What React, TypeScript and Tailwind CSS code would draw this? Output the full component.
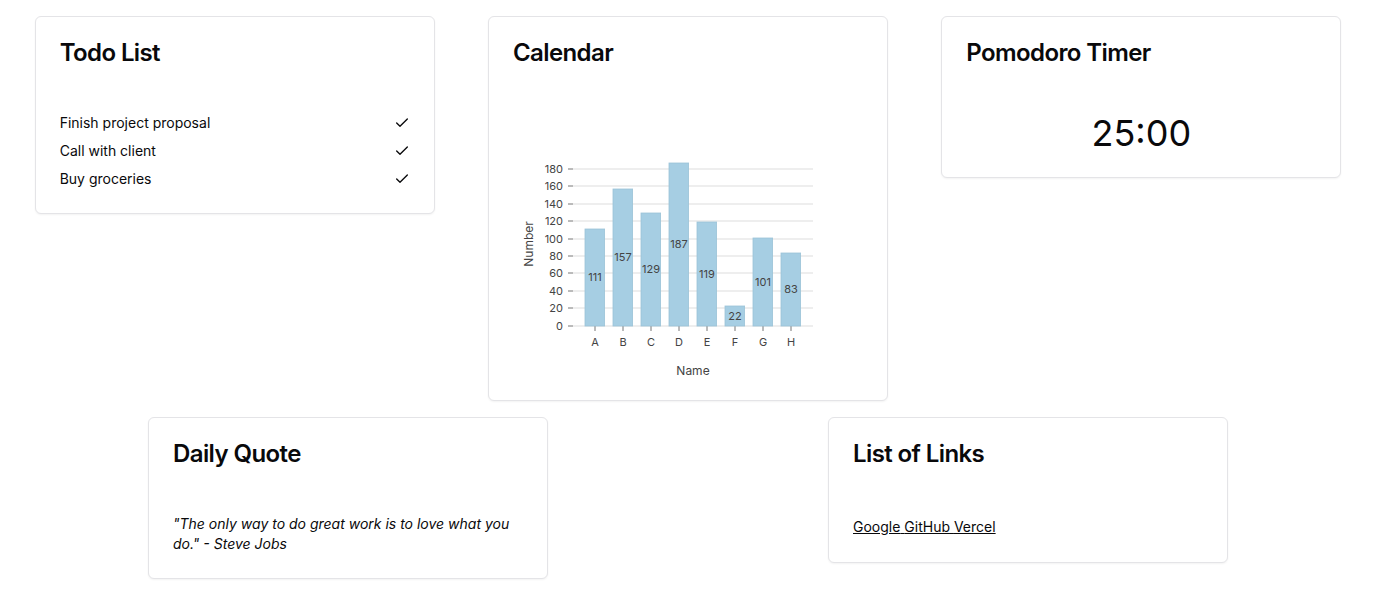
import type { ReactNode } from "react";
import { Check } from "lucide-react";

function Card({ title, children }: { title: string; children: ReactNode }) {
  return (
    <section className="w-[400px] max-w-full rounded-md border border-[#e4e4e7] bg-white text-[#09090b] shadow-xs">
      <header className="p-6">
        <h2 className="text-2xl leading-none font-semibold tracking-tight">{title}</h2>
      </header>
      <div className="p-6">{children}</div>
    </section>
  );
}

const todos = ["Finish project proposal", "Call with client", "Buy groceries"];

const links = [
  { label: "Google", href: "https://google.com" },
  { label: "GitHub", href: "https://github.com" },
  { label: "Vercel", href: "https://vercel.com" },
];

const data = [
  { name: "A", count: 111 },
  { name: "B", count: 157 },
  { name: "C", count: 129 },
  { name: "D", count: 187 },
  { name: "E", count: 119 },
  { name: "F", count: 22 },
  { name: "G", count: 101 },
  { name: "H", count: 83 },
];

const ticks = [0, 20, 40, 60, 80, 100, 120, 140, 160, 180];
const plotWidth = 240;
const plotHeight = 163;
const barWidth = 20;
const barStep = 28;
const yScale = (value: number) => Math.round((1 - value / 187) * 162.5);

function BarChart() {
  return (
    <svg
      viewBox="0 0 350 262.5"
      role="img"
      aria-label="Number by name"
      className="block aspect-[4/3] w-full overflow-visible"
    >
      <g transform="translate(60,50)" fill="#444444" fontSize="11">
        {ticks.map((t) => (
          <line key={t} x1={0} x2={plotWidth} y1={yScale(t)} y2={yScale(t)} stroke="#dddddd" />
        ))}
        {ticks.map((t) => (
          <g key={t} transform={`translate(0,${yScale(t)})`}>
            <line x1={-5} x2={0} y1={0} y2={0} stroke="#777777" />
            <text x={-10} y={4} textAnchor="end">
              {t}
            </text>
          </g>
        ))}
        {data.map((d, i) => (
          <g key={d.name} transform={`translate(${12 + i * barStep + barWidth / 2},${plotHeight})`}>
            <line y1={0} y2={5} stroke="#777777" />
            <text y={20} textAnchor="middle">
              {d.name}
            </text>
          </g>
        ))}
        {data.map((d, i) => {
          const top = yScale(d.count);
          const height = plotHeight - top;
          return (
            <g key={d.name} transform={`translate(${12 + i * barStep},${top})`}>
              <rect width={barWidth - 0.4} height={height} fill="#a6cee3" stroke="#9cc3d8" strokeWidth={0.8} />
              <text x={barWidth / 2} y={Math.floor(height / 2) + 4} textAnchor="middle">
                {d.count}
              </text>
            </g>
          );
        })}
        <text x={plotWidth / 2} y={212} fontSize="12" textAnchor="middle">
          Name
        </text>
        <text
          transform="translate(-40,81) rotate(-90)"
          fontSize="12"
          textAnchor="middle"
        >
          Number
        </text>
      </g>
    </svg>
  );
}

export default function App() {
  return (
    <main className="flex flex-wrap items-start justify-around gap-4 bg-white p-4 font-['Inter',sans-serif]">
      <Card title="Todo List">
        <ul className="flex flex-col gap-2 text-sm">
          {todos.map((todo) => (
            <li key={todo} className="flex items-center justify-between">
              <span>{todo}</span>
              <Check className="size-4" aria-hidden="true" />
            </li>
          ))}
        </ul>
      </Card>
      <Card title="Calendar">
        <BarChart />
      </Card>
      <Card title="Pomodoro Timer">
        <p className="text-center text-4xl">25:00</p>
      </Card>
      <Card title="Daily Quote">
        <p className="text-sm italic">
          "The only way to do great work is to love what you do." - Steve Jobs
        </p>
      </Card>
      <Card title="List of Links">
        <nav aria-label="Links" className="text-base">
          {links.map((link, i) => (
            <a key={link.label} href={link.href} className="text-sm underline">
              {link.label}
              {i < links.length - 1 ? " " : ""}
            </a>
          ))}
        </nav>
      </Card>
    </main>
  );
}
